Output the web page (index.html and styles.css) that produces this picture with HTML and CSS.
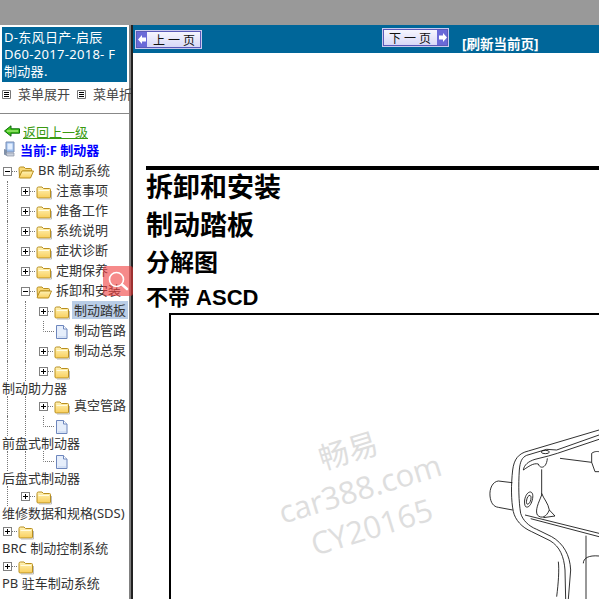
FILE: index.html
```html
<!DOCTYPE html>
<html lang="zh-CN">
<head>
    <meta charset="UTF-8">
    <title>制动踏板</title>
    <link rel="stylesheet" href="styles.css">
</head>
<body>
    <svg class="defs" width="0" height="0">
        <defs>
            <linearGradient id="folder-fill" x1="0" y1="0" x2="0" y2="1">
                <stop offset="0" stop-color="#fff3b8"/>
                <stop offset="1" stop-color="#f9cf5c"/>
            </linearGradient>
            <symbol id="plus" viewBox="0 0 18 20">
                <path d="M12 10.5h6" stroke="#777" stroke-dasharray="1 1" fill="none"/>
                <rect x="3.5" y="6.5" width="8" height="8" fill="#fff" stroke="#808080"/>
                <path d="M5 10.5h5M7.5 8v5" stroke="#000" fill="none"/>
            </symbol>
            <symbol id="minus" viewBox="0 0 18 20">
                <path d="M12 10.5h6" stroke="#777" stroke-dasharray="1 1" fill="none"/>
                <rect x="3.5" y="6.5" width="8" height="8" fill="#fff" stroke="#808080"/>
                <path d="M5 10.5h5" stroke="#000" fill="none"/>
            </symbol>
            <symbol id="leaf" viewBox="0 0 18 20">
                <path d="M7.5 0v10.5H18" stroke="#777" stroke-dasharray="1 1" fill="none"/>
            </symbol>
            <symbol id="folder" viewBox="0 0 16 16">
                <path d="M1 4.500q0-1.500 1.500-1.500h3.500l1.500 1.500h6q1 0 1 1v7.500q0 1-1 1h-11q-1.500 0-1.500-1z" fill="url(#folder-fill)" stroke="#b98f1f"/>
                <path d="M2.500 6.500h10.500" stroke="#fffbe0" fill="none"/>
                <path d="M3 15h12.500M15.500 7v8" stroke="#bbb" fill="none"/>
            </symbol>
            <symbol id="folder-open" viewBox="0 0 16 16">
                <path d="M1 4.500q0-1.500 1.500-1.500h3.500l1.500 1.500h5q1 0 1 1v1.500h-9l-3 6z" fill="#f8d878" stroke="#b98f1f"/>
                <path d="M1 13.500l3-6.500h11.500l-3 7h-10.500z" fill="url(#folder-fill)" stroke="#b98f1f"/>
            </symbol>
            <symbol id="doc" viewBox="0 0 16 16">
                <path d="M2.500 1.500h7l3.500 3.500v9.500h-10.500z" fill="#e6eefb" stroke="#6d86bd"/>
                <path d="M9.500 1.500v3.500h3.500" fill="#fff" stroke="#6d86bd"/>
                <path d="M4 13h8" stroke="#c3d3ee" fill="none"/>
            </symbol>
        </defs>
    </svg>

    <div class="top-band"></div>

    <div class="layout">
        <div class="side">
            <div class="side-title">D-东风日产-启辰 D60-2017-2018- F 制动器.</div>

            <div class="menu-links">
                <svg class="menu-icon" width="9" height="9" viewBox="0 0 9 9"><path d="M.5.500h8v8h-8z" fill="#fff" stroke="#777"/><path d="M2 2.500h5M2 4.500h5M2 6.500h5" stroke="#000"/></svg>
                <span class="menu-text">菜单展开</span>
                <svg class="menu-icon" width="9" height="9" viewBox="0 0 9 9"><path d="M.5.500h8v8h-8z" fill="#fff" stroke="#777"/><path d="M2 2.500h5M2 4.500h5M2 6.500h5" stroke="#000"/></svg>
                <span class="menu-text">菜单折叠</span>
            </div>

            <div class="side-rule"></div>

            <div class="back-row">
                <svg width="16" height="12" viewBox="0 0 16 12"><path d="M.5 6L7 .8v3h8.500v4.400H7v3z" fill="#44c81a" stroke="#0a6b0a"/><path d="M3 6h11" stroke="#c8f4a0"/></svg>
                <a class="back-link">返回上一级</a>
            </div>
            <div class="current-row">
                <svg width="12" height="17" viewBox="0 0 12 17"><path d="M3 1h8v10H3z" fill="#9cc0ee" stroke="#7c8fb5"/><path d="M4.500 2.500h5v6h-5z" fill="#e4efff"/><path d="M1 8l3 1v6l-3-1.500z" fill="#8090a8"/><path d="M3 12h8v3H4z" fill="#c9d0dc" stroke="#8a93a5" stroke-width=".7"/></svg>
                <span class="current-text">当前:F 制动器</span>
            </div>

            <div class="tree">
                <div class="row"><svg class="tog"><use href="#minus"/></svg><svg class="ico"><use href="#folder-open"/></svg><span class="label">BR 制动系统</span></div>
                <div class="row"><i class="guide"></i><svg class="tog"><use href="#plus"/></svg><svg class="ico"><use href="#folder"/></svg><span class="label">注意事项</span></div>
                <div class="row"><i class="guide"></i><svg class="tog"><use href="#plus"/></svg><svg class="ico"><use href="#folder"/></svg><span class="label">准备工作</span></div>
                <div class="row"><i class="guide"></i><svg class="tog"><use href="#plus"/></svg><svg class="ico"><use href="#folder"/></svg><span class="label">系统说明</span></div>
                <div class="row"><i class="guide"></i><svg class="tog"><use href="#plus"/></svg><svg class="ico"><use href="#folder"/></svg><span class="label">症状诊断</span></div>
                <div class="row"><i class="guide"></i><svg class="tog"><use href="#plus"/></svg><svg class="ico"><use href="#folder"/></svg><span class="label">定期保养</span></div>
                <div class="row"><i class="guide"></i><svg class="tog"><use href="#minus"/></svg><svg class="ico"><use href="#folder-open"/></svg><span class="label">拆卸和安装</span></div>
                <div class="row"><i class="guide"></i><i class="guide"></i><svg class="tog"><use href="#plus"/></svg><svg class="ico"><use href="#folder"/></svg><span class="label selected">制动踏板</span></div>
                <div class="row"><i class="guide"></i><i class="guide"></i><svg class="tog"><use href="#leaf"/></svg><svg class="ico"><use href="#doc"/></svg><span class="label">制动管路</span></div>
                <div class="row"><i class="guide"></i><i class="guide"></i><svg class="tog"><use href="#plus"/></svg><svg class="ico"><use href="#folder"/></svg><span class="label">制动总泵</span></div>
                <div class="row"><i class="guide"></i><i class="guide"></i><svg class="tog"><use href="#plus"/></svg><svg class="ico"><use href="#folder"/></svg></div>
                <div class="wrapped">制动助力器</div>
                <div class="row"><i class="guide"></i><i class="guide"></i><svg class="tog"><use href="#plus"/></svg><svg class="ico"><use href="#folder"/></svg><span class="label">真空管路</span></div>
                <div class="row"><i class="guide"></i><i class="guide"></i><svg class="tog"><use href="#leaf"/></svg><svg class="ico"><use href="#doc"/></svg></div>
                <div class="wrapped">前盘式制动器</div>
                <div class="row"><i class="guide"></i><i class="guide"></i><svg class="tog"><use href="#leaf"/></svg><svg class="ico"><use href="#doc"/></svg></div>
                <div class="wrapped">后盘式制动器</div>
                <div class="row"><i class="guide"></i><svg class="tog"><use href="#plus"/></svg><svg class="ico"><use href="#folder"/></svg></div>
                <div class="wrapped">维修数据和规格(SDS)</div>
                <div class="row"><svg class="tog"><use href="#plus"/></svg><svg class="ico"><use href="#folder"/></svg></div>
                <div class="wrapped">BRC 制动控制系统</div>
                <div class="row"><svg class="tog"><use href="#plus"/></svg><svg class="ico"><use href="#folder"/></svg></div>
                <div class="wrapped">PB 驻车制动系统</div>
            </div>
        </div>

        <div class="main">
            <div class="nav">
                <a class="page-btn btn-prev">
                    <span class="btn-arrow"><svg width="8" height="9" viewBox="0 0 8 9"><path d="M0 4.500L4 0v2.500h4v4H4V9z" fill="#fff"/></svg></span>
                    <span class="btn-text">上 一 页</span>
                </a>
                <a class="page-btn btn-next">
                    <span class="btn-text">下 一 页</span>
                    <span class="btn-arrow"><svg width="8" height="9" viewBox="0 0 8 9"><path d="M8 4.500L4 0v2.500H0v4h4V9z" fill="#fff"/></svg></span>
                </a>
                <a class="refresh">[刷新当前页]</a>
            </div>

            <div class="doc">
                <div class="doc-rule"></div>
                <h1>拆卸和安装</h1>
                <h1>制动踏板</h1>
                <h2>分解图</h2>
                <h3>不带 ASCD</h3>
                <div class="figure">
                    <svg class="drawing" width="199" height="179" viewBox="0 0 597 537">
                        <g fill="none" stroke="#111" stroke-width="2.600">
                            <path d="M597 30L385 93C355 100 342 118 338 150C333 195 333 240 340 275C346 300 365 322 395 335L450 362C480 380 492 410 495 450L497 537"/>
                            <path d="M597 45L470 90L440 88L380 106C366 112 360 125 358 150C355 195 356 245 362 280C368 300 385 318 410 328L455 350C490 370 510 405 512 450L505 537"/>
                            <path d="M597 58L472 100L445 108L405 118C385 124 372 135 370 150"/>
                            <path d="M424 96a12 5 0 0 1 24 0a12 5 0 0 1 -24 0"/>
                            <path d="M370 150C385 140 400 128 415 132C420 148 440 145 442 115"/>
                            <path d="M425 148V225C415 250 405 270 412 285C425 298 440 290 448 270C445 250 430 235 425 220"/>
                            <path d="M337 188L295 183C278 185 268 205 270 228C272 248 280 260 295 262L338 270"/>
                            <path d="M374 240c2-14 10-25 18-24c8 2 8 16 3 30c-4 12-12 18-18 14c-3-3-4-12-3-20z"/>
                            <path d="M380 240c1-8 6-15 10-14c4 2 4 10 1 18c-3 7-7 10-10 8c-2-2-2-7-1-12z"/>
                            <path d="M375 285L597 340M392 296L597 350"/>
                            <path d="M480 115L575 127M575 127V100C585 92 597 95 597 95M575 127L585 155H597"/>
                            <path d="M430 293L465 288L448 270"/>
                            <path d="M558 347V537M550 430C550 415 565 405 597 408"/>
                            <path d="M470 530C475 490 478 450 475 425"/>
                        </g>
                    </svg>
                </div>
            </div>
        </div>
    </div>

    <!-- over the page -->
    <div class="search-badge">
        <svg width="24" height="24" viewBox="0 0 24 24"><circle cx="10.500" cy="10.500" r="7" fill="none" stroke="#fff" stroke-width="1.600"/><path d="M16 15.500l5 4.500" stroke="#fff" stroke-width="2.600" stroke-linecap="round"/></svg>
    </div>
    <div class="watermark">
        <div class="wm-cn">畅易</div>
        <div class="wm-line">car388.com</div>
        <div class="wm-line">CY20165</div>
    </div>
</body>
</html>
```

FILE: styles.css
```css
* {
    box-sizing: border-box;
}

html, body {
    margin: 0;
    height: 100%;
    overflow: hidden;
}

body {
    font-family: "Noto Sans", "Noto Sans CJK SC", sans-serif;
    font-size: 13px;
    color: #333;
    background-color: #fff;
}

.defs {
    position: absolute;
}

.top-band {
    height: 25px;
    background-color: #999;
}

.layout {
    display: flex;
    height: 574px;
}

/* left frame */
.side {
    width: 133px;
    flex: none;
    overflow: hidden;
    white-space: nowrap;
    border-right: 2px solid #222;
    box-shadow: inset -2px 0 0 #808080;
}

.side-title {
    margin: 2px 4px 0 2px;
    padding: 2px 2px 0;
    height: 55px;
    line-height: 17px;
    letter-spacing: .3px;
    white-space: normal;
    color: #fff;
    background-color: #006699;
}

.menu-links {
    display: flex;
    align-items: center;
    height: 19px;
    margin-top: 3px;
    padding-left: 2px;
}

.menu-icon {
    flex: none;
}

.menu-text {
    flex: none;
    margin-left: 7px;
    margin-right: 7px;
    line-height: 19px;
    color: #444;
}

.side-rule {
    height: 1px;
    margin: 9px 2px 0 0;
    background-color: #888;
}

.back-row {
    display: flex;
    align-items: center;
    gap: 3px;
    height: 18px;
    margin-top: 8px;
    padding-left: 4px;
}

.back-link {
    color: #3a9a12;
    text-decoration: underline;
}

.current-row {
    display: flex;
    align-items: center;
    gap: 5px;
    height: 18px;
    padding-left: 3px;
}

.current-text {
    font-weight: bold;
    color: #0000ff;
}

/* tree */
.tree {
    margin-top: 3px;
}

.row {
    display: flex;
    height: 20px;
}

.wrapped {
    height: 15px;
    line-height: 15px;
    padding-left: 2px;
}

.guide {
    width: 11px;
    margin-left: 7px;
    border-left: 1px dotted #777;
}

.tog {
    width: 18px;
    height: 20px;
    flex: none;
}

.ico {
    width: 16px;
    height: 16px;
    flex: none;
    margin-top: 3px;
}

.label {
    height: 18px;
    margin-left: 2px;
    padding: 0 2px;
    line-height: 18px;
}

.selected {
    background-color: #b9cde6;
}

/* right frame */
.main {
    flex: 1;
    min-width: 0;
    overflow: hidden;
}

.nav {
    display: flex;
    align-items: flex-start;
    height: 28px;
    background-color: #006699;
}

.page-btn {
    display: flex;
    align-items: center;
    height: 19px;
    width: 67px;
    border: 1px solid #c9c9ee;
    outline: 1px solid #5a5ab8;
    outline-offset: -2px;
    background: linear-gradient(#f8f8ff, #d6d6f6);
    color: #111;
    font-size: 12px;
}

.btn-prev {
    margin: 5px 0 0 2px;
}

.btn-next {
    margin: 3px 0 0 180px;
}

.btn-text {
    flex: 1;
    text-align: center;
    white-space: nowrap;
}

.btn-arrow {
    display: flex;
    align-items: center;
    justify-content: center;
    width: 11px;
    height: 100%;
    background-color: #6a6ad8;
}

.refresh {
    margin: 10px 0 0 13px;
    font-size: 13.500px;
    line-height: 18px;
    font-weight: bold;
    color: #fff;
    white-space: nowrap;
}

.doc {
    padding: 113px 0 0 13px;
    color: #000;
    font-family: "Liberation Sans", "Noto Sans CJK SC", sans-serif;
}

.doc-rule {
    height: 4px;
    background-color: #000;
}

h1, h2, h3 {
    margin: 0;
    font-weight: bold;
    white-space: nowrap;
}

h1 {
    height: 38px;
    font-size: 27px;
    line-height: 36px;
}

h2 {
    height: 35px;
    font-size: 24px;
    line-height: 34px;
}

h3 {
    height: 32px;
    font-size: 22px;
    line-height: 34px;
}

.figure {
    width: 500px;
    height: 300px;
    margin-left: 23px;
    padding: 105px 0 0 229px;
    border: 2px solid #000;
}

.drawing {
    display: block;
}

/* overlays */
.search-badge {
    position: absolute;
    left: 103px;
    top: 266px;
    width: 30px;
    height: 30px;
    display: flex;
    align-items: center;
    justify-content: center;
    border-radius: 3px;
    background-color: rgba(240, 60, 60, 0.6);
}

.watermark {
    position: absolute;
    left: 250px;
    top: 430px;
    width: 220px;
    text-align: center;
    color: #dedede;
    font-family: "Open Sans", "Noto Sans CJK SC", sans-serif;
    transform: rotate(-17deg);
}

.wm-cn {
    font-size: 30px;
    line-height: 38px;
}

.wm-line {
    font-size: 31px;
    line-height: 40px;
    white-space: nowrap;
}
```
